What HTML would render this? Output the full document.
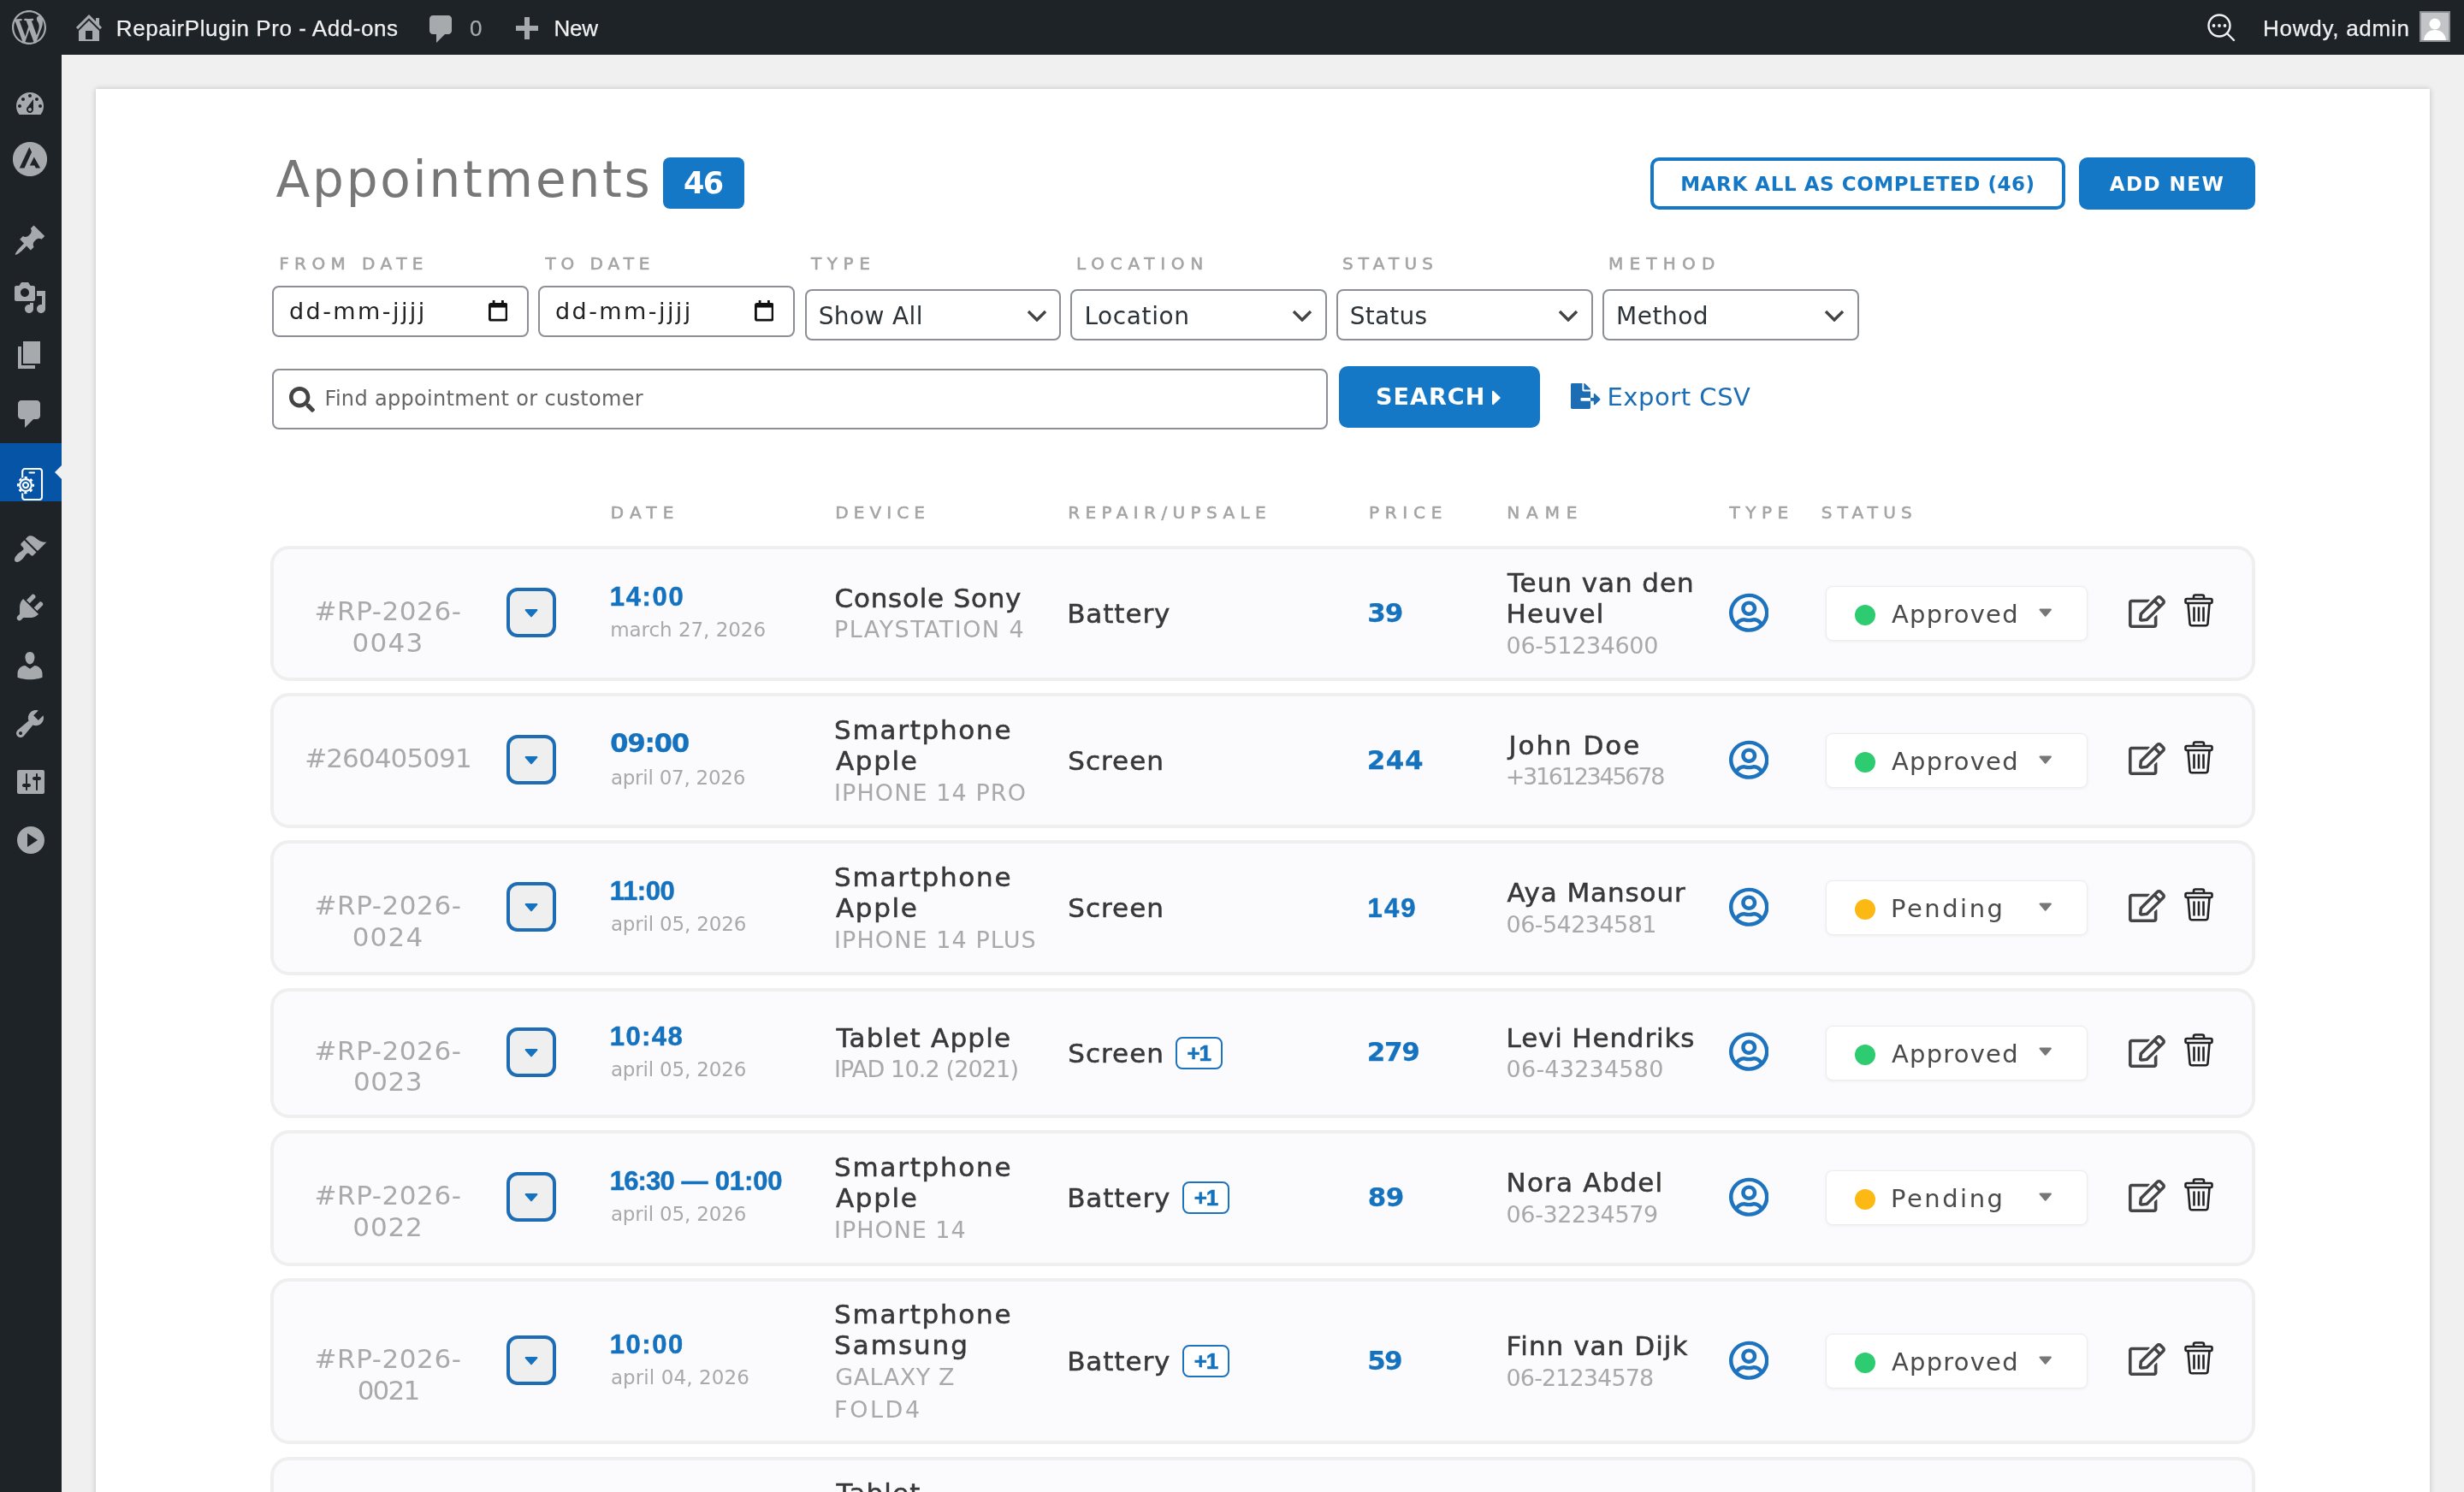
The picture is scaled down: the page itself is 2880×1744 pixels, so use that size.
<!DOCTYPE html><html><head><meta charset='utf-8'><title>Appointments</title><style>
*{box-sizing:border-box;margin:0;padding:0}
html,body{width:2880px;height:1744px;overflow:hidden;background:#f0f0f1}
@media (max-width:1500px){html{zoom:.5}}
body{position:relative;will-change:transform;background:transparent;font-family:"DejaVu Sans","Liberation Sans",sans-serif;color:#333}
.abs{position:absolute}
#bar{position:absolute;left:0;top:0;width:2880px;height:64px;background:#1d2327;font-family:"Liberation Sans",sans-serif;font-size:26px;color:#f0f0f1}
#bar span{position:absolute;top:1px;line-height:64px;white-space:nowrap;-webkit-text-stroke:.25px currentColor}
#side{position:absolute;left:0;top:64px;width:72px;height:1680px;background:#1d2327}
#card{position:absolute;left:112px;top:104px;width:2728px;height:1700px;background:#fff;box-shadow:0 0 7px rgba(0,0,0,.2)}
.lbl{position:absolute;font-size:20px;color:#a4a4a4;-webkit-text-stroke:.6px #a4a4a4;white-space:nowrap;line-height:24px}
.inp{position:absolute;border:2px solid #8c8f94;border-radius:8px;background:#fff;height:60px;width:300px}
.inp span{white-space:nowrap}
.inp>div{position:absolute;left:18px;top:0;line-height:55px;font-size:27px;color:#222;white-space:nowrap}
.sel>div{left:16.5px;line-height:59px;font-size:28px;color:#2c3338}
.row{position:absolute;left:316px;width:2320px;border:4px solid #efefef;border-radius:22px;background:#fbfbfd}
.c{position:absolute;top:0;bottom:0;display:flex;flex-direction:column;justify-content:center}
.id{position:absolute;left:15.5px;width:236px;text-align:center;font-size:31px;line-height:36.5px;color:#a9a9a9;top:50%;margin-top:-21px;white-space:nowrap}
.btn{position:absolute;left:272px;width:58px;height:58px;border:4px solid #1e6db4;border-radius:13px;background:#efefef;top:50%;margin-top:-30px}
.t{position:relative;top:.7px;font-family:"Liberation Sans",sans-serif;font-size:31px;font-weight:bold;color:#1572be;-webkit-text-stroke:.5px #1572be;line-height:38px;white-space:nowrap}
.d{font-size:23px;color:#a9a9a9;line-height:40px;white-space:nowrap}
.n{font-size:31px;color:#383838;line-height:36.5px;-webkit-text-stroke:.55px #383838;white-space:nowrap}
.m{font-size:27px;color:#a9a9a9;line-height:38px;white-space:nowrap}
.p{padding-top:1px;font-family:"Liberation Sans",sans-serif;font-size:31px;font-weight:bold;color:#1572be;-webkit-text-stroke:.5px #1572be;white-space:nowrap}
.st{position:absolute;left:1814px;width:306px;height:64px;top:50%;margin-top:-32px;background:#fff;border:1px solid #ececec;border-radius:8px;box-shadow:0 1px 4px rgba(0,0,0,.06)}
.st i{position:absolute;left:33px;top:21px;width:24px;height:24px;border-radius:50%}
.st div{position:absolute;left:76px;top:0;line-height:64px;font-size:29px;color:#4a4a4a;white-space:nowrap}
.dj{font-family:"DejaVu Sans",sans-serif;-webkit-text-stroke-width:.25px;position:relative}
.p .dj{top:-2px}
.t .dj{top:-1.5px}
.plus{position:absolute;border:2px solid #1e73be;border-radius:8px;width:55px;height:38px;background:#fff;font-family:"Liberation Sans",sans-serif;font-size:26px;font-weight:bold;color:#1572be;-webkit-text-stroke:.5px #1572be;text-align:center;line-height:35px;letter-spacing:-1px;top:50%;margin-top:-19px}
</style></head><body>
<div id="bar"><svg style="position:absolute;left:14px;top:12px" width="40" height="40" viewBox="0 0 20 20"><path fill="#a7aaad" d="M20 10c0-5.51-4.49-10-10-10C4.48 0 0 4.49 0 10c0 5.52 4.48 10 10 10 5.51 0 10-4.48 10-10zM7.78 15.37L4.37 6.22c.55-.02 1.17-.08 1.17-.08.5-.06.44-1.13-.06-1.11 0 0-1.45.11-2.37.11-.18 0-.37 0-.58-.01C4.12 2.69 6.87 1.11 10 1.11c2.33 0 4.45.87 6.05 2.34-.68-.11-1.65.39-1.65 1.58 0 .74.45 1.36.9 2.1.35.61.55 1.36.55 2.46 0 1.49-1.4 5-1.4 5l-3.03-8.37c.54-.02.82-.17.82-.17.5-.05.44-1.25-.06-1.22 0 0-1.44.12-2.38.12-.87 0-2.33-.12-2.33-.12-.5-.03-.56 1.2-.06 1.22l.92.08 1.26 3.41zM17.41 10c.24-.64.74-1.87.43-4.25.7 1.29 1.05 2.71 1.05 4.25 0 3.29-1.73 6.24-4.4 7.78.97-2.59 1.94-5.2 2.92-7.78zM6.1 18.09C3.12 16.65 1.11 13.53 1.11 10c0-1.3.23-2.48.72-3.59C3.25 10.3 4.67 14.2 6.1 18.09zm4.03-6.63l2.58 6.98c-.86.29-1.76.45-2.71.45-.79 0-1.57-.11-2.29-.33.81-2.38 1.62-4.74 2.42-7.1z"/></svg><svg style="position:absolute;left:84px;top:12px" width="40" height="40" viewBox="0 0 20 20"><path fill="#a7aaad" d="M16 8.5l1.53 1.53-1.06 1.06L10 4.62l-6.47 6.47-1.06-1.06L10 2.5l4 4v-2h2v4zm-6-2.46l6 5.99V18H4v-5.97zM12 17v-5H8v5h4z"/></svg><span style="left:135.8px;letter-spacing:0.57px">RepairPlugin Pro - Add-ons</span><svg style="position:absolute;left:496px;top:14px" width="40" height="40" viewBox="0 0 20 20"><path fill="#a7aaad" d="M5 2h9c1.1 0 2 .9 2 2v7c0 1.1-.9 2-2 2h-2l-5 5v-5H5c-1.1 0-2-.9-2-2V4c0-1.1.9-2 2-2z"/></svg><span style="left:549px;color:#a7aaad">0</span><svg style="position:absolute;left:595px;top:16px" width="40" height="40" viewBox="0 0 20 20"><path fill="#a7aaad" d="M17 7v3h-5v5H9v-5H4V7h5V2h3v5h5z"/></svg><span style="left:647.5px;letter-spacing:-.3px">New</span><svg style="position:absolute;left:2578px;top:14px" width="36" height="36" viewBox="0 0 36 36" fill="none" stroke="#f0f0f1" stroke-width="2.4"><circle cx="16" cy="16" r="12.5"/><path d="M25 25l8 8" stroke-linecap="round"/><g fill="#f0f0f1" stroke="none"><circle cx="9.5" cy="16" r="1.900"/><circle cx="16" cy="16" r="1.900"/><circle cx="22.500" cy="16" r="1.900"/></g></svg><span style="left:2645px;letter-spacing:0.74px">Howdy, admin</span><svg style="position:absolute;left:2828px;top:13px" width="36" height="36" viewBox="0 0 36 36"><rect width="36" height="36" fill="#8c8f94"/><rect x="2" y="2" width="32" height="32" fill="#c3c4c7"/><circle cx="18" cy="15" r="6.5" fill="#fff"/><path d="M5 34c1-8 6-12 13-12s12 4 13 12z" fill="#fff"/></svg></div>
<div id="side"><svg style="position:absolute;left:15px;top:38px" width="40" height="40" viewBox="0 0 20 20"><path fill="#a7aaad" d="M3.76 16h12.48c1.1-1.37 1.76-3.11 1.76-5 0-4.42-3.58-8-8-8s-8 3.58-8 8c0 1.89.66 3.63 1.76 5zM10 4c.55 0 1 .45 1 1s-.45 1-1 1-1-.45-1-1 .45-1 1-1zM6 6c.55 0 1 .45 1 1s-.45 1-1 1-1-.45-1-1 .45-1 1-1zm8 0c.55 0 1 .45 1 1s-.45 1-1 1-1-.45-1-1 .45-1 1-1zm-5.37 5.55L12 7v6c0 1.1-.9 2-2 2s-2-.9-2-2c0-.57.24-1.08.63-1.45zM4 10c.55 0 1 .45 1 1s-.45 1-1 1-1-.45-1-1 .45-1 1-1zm12 0c.55 0 1 .45 1 1s-.45 1-1 1-1-.45-1-1 .45-1 1-1zm-5 3c0-.55-.45-1-1-1s-1 .45-1 1 .45 1 1 1 1-.45 1-1z"/></svg><svg style="position:absolute;left:15px;top:102px" width="40" height="40" viewBox="0 0 40 40"><circle cx="20" cy="20" r="20.1" fill="#a7aaad"/><path d="M19.200 6L22.100 11.700 13.500 30.400H7.800zM24.800 17.400L32.100 30.400H26.900L25.400 27.500H19.800z" fill="#1d2327"/></svg><svg style="position:absolute;left:15px;top:196.5px" width="40" height="40" viewBox="0 0 20 20"><path fill="#a7aaad" d="M10.44 3.02l1.82-1.82 6.36 6.35-1.83 1.82c-1.05-.68-2.48-.57-3.41.36l-.75.75c-.92.93-1.04 2.35-.35 3.41l-1.83 1.82-2.41-2.41-2.8 2.79c-.42.42-3.38 2.71-3.8 2.29s1.86-3.39 2.28-3.81l2.79-2.79L4.1 9.36l1.83-1.82c1.05.69 2.48.57 3.4-.36l.75-.75c.93-.92 1.05-2.35.36-3.41z"/></svg><svg style="position:absolute;left:15px;top:264px" width="40" height="40" viewBox="0 0 20 20"><path fill="#a7aaad" d="M13 11V4c0-.55-.45-1-1-1h-1.67L9 1H5L3.67 3H2c-.55 0-1 .45-1 1v7c0 .55.45 1 1 1h10c.55 0 1-.45 1-1zM7 4.5c1.38 0 2.5 1.12 2.5 2.5S8.38 9.5 7 9.5 4.5 8.38 4.5 7 5.62 4.5 7 4.5zM14 6h5v10.5c0 1.38-1.12 2.5-2.5 2.5S14 17.88 14 16.5s1.12-2.5 2.5-2.5c.17 0 .34.02.5.05V9h-3V6zm-4 8.05V13h2v3.5c0 1.38-1.12 2.5-2.5 2.5S7 17.88 7 16.5 8.12 14 9.5 14c.17 0 .34.02.5.05z"/></svg><svg style="position:absolute;left:15px;top:331.3px" width="40" height="40" viewBox="0 0 20 20"><path fill="#a7aaad" d="M6 15V2h10v13H6zm-1 1h8v2H3V5h2v11z"/></svg><svg style="position:absolute;left:15px;top:399.5px" width="40" height="40" viewBox="0 0 20 20"><path fill="#a7aaad" d="M5 2h9c1.1 0 2 .9 2 2v7c0 1.1-.9 2-2 2h-2l-5 5v-5H5c-1.1 0-2-.9-2-2V4c0-1.1.9-2 2-2z"/></svg><div style="position:absolute;left:0;top:454px;width:72px;height:68px;background:#0654a6"></div><div style="position:absolute;left:64px;top:480px;width:0;height:0;border:8px solid transparent;border-right-color:#f0f0f1;border-left-width:0"></div><svg style="position:absolute;left:14px;top:481px" width="40" height="42" viewBox="0 0 40 42" fill="none" stroke="#fff" stroke-width="2.1"><path d="M12.200 13.500V6a3 3 0 0 1 3-3H32a3 3 0 0 1 3 3V36a3 3 0 0 1-3 3H15.200a3 3 0 0 1-3-3V31.500"/><path d="M20.500 7.500h5.500" stroke-linecap="round"/><circle cx="16" cy="22.100" r="3.100"/><circle cx="16" cy="22.100" r="6.900" stroke-width="2.200"/><circle cx="16" cy="22.100" r="8.900" stroke-width="2.400" stroke-dasharray="3.300 3.690" stroke-dashoffset="1.650"/></svg><svg style="position:absolute;left:15px;top:558px" width="40" height="40" viewBox="0 0 20 20"><path fill="#a7aaad" d="M14.48 11.06L7.41 3.99l1.5-1.5c.5-.56 2.3-.47 3.51.32 1.21.8 1.43 1.28 2.91 2.1 1.18.64 2.45 1.26 4.45.85zm-.71.71L6.7 4.7 4.93 6.47c-.39.39-.39 1.02 0 1.41l1.06 1.06c.39.39.39 1.03 0 1.42-.6.6-1.43 1.11-2.21 1.69-.35.26-.7.53-1.01.84C1.43 14.23.4 16.08 1.4 17.07c.99 1 2.84-.03 4.18-1.36.31-.31.58-.66.85-1.02.57-.78 1.08-1.61 1.69-2.21.39-.39 1.02-.39 1.41 0l1.06 1.06c.39.39 1.02.39 1.41 0z"/></svg><svg style="position:absolute;left:15px;top:626.3px" width="40" height="40" viewBox="0 0 20 20"><path fill="#a7aaad" d="M13.11 4.36L9.87 7.6 8 5.73l3.24-3.24c.35-.34 1.05-.2 1.56.32.52.51.66 1.21.31 1.55zm-8 1.77l.91-1.12 9.01 9.01-1.19.84c-.71.71-2.63 1.16-3.82 1.16H6.14L4.9 17.26c-.59.59-1.54.59-2.12 0-.59-.58-.59-1.53 0-2.12l1.24-1.24v-3.88c0-1.13.4-3.19 1.09-3.89zm7.26 3.97l3.24-3.24c.34-.35 1.04-.21 1.55.31.52.51.66 1.21.31 1.55l-3.24 3.25z"/></svg><svg style="position:absolute;left:15px;top:693.7px" width="40" height="40" viewBox="0 0 20 20"><path fill="#a7aaad" d="M10 9.25c-2.27 0-2.73-3.44-2.73-3.44C7 4.02 7.82 2 9.97 2c2.16 0 2.98 2.02 2.71 3.81 0 0-.41 3.44-2.68 3.44zm0 2.57L12.72 10c2.39 0 4.52 2.33 4.52 4.53v2.49s-3.65 1.13-7.24 1.13c-3.65 0-7.24-1.13-7.24-1.13v-2.49c0-2.25 1.94-4.48 4.47-4.48z"/></svg><svg style="position:absolute;left:15px;top:762.2px" width="40" height="40" viewBox="0 0 20 20"><path fill="#a7aaad" d="M16.68 9.77c-1.34 1.34-3.3 1.67-4.95.99l-5.41 6.52c-.99.99-2.59.99-3.58 0s-.99-2.59 0-3.57l6.52-5.42c-.68-1.65-.35-3.61.99-4.95 1.28-1.28 3.12-1.62 4.72-1.06l-2.89 2.89 2.82 2.82 2.86-2.87c.53 1.58.18 3.39-1.08 4.65zM3.81 16.21c.4.39 1.04.39 1.43 0 .4-.4.4-1.04 0-1.43-.39-.4-1.03-.4-1.43 0-.39.39-.39 1.03 0 1.43z"/></svg><svg style="position:absolute;left:16px;top:830px" width="40" height="40" viewBox="0 0 20 20"><path fill="#a7aaad" d="M18 16V4c0-.55-.45-1-1-1H3c-.55 0-1 .45-1 1v12c0 .55.45 1 1 1h14c.55 0 1-.45 1-1zM8 11h1c.55 0 1 .45 1 1s-.45 1-1 1H8v1.5c0 .28-.22.5-.5.5s-.5-.22-.5-.5V13H6c-.55 0-1-.45-1-1s.45-1 1-1h1V5.5c0-.28.22-.5.5-.5s.5.22.5.5V11zm5-2h-1c-.55 0-1-.45-1-1s.45-1 1-1h1V5.5c0-.28.22-.5.5-.5s.5.22.5.5V7h1c.55 0 1 .45 1 1s-.45 1-1 1h-1v5.5c0 .28-.22.5-.5.5s-.5-.22-.5-.5V9z"/></svg><svg style="position:absolute;left:16px;top:898px" width="40" height="40" viewBox="0 0 20 20"><path fill="#a7aaad" d="M10 2.02c-4.42 0-8 3.58-8 8s3.58 8 8 8 8-3.58 8-8-3.58-8-8-8zM8 14V6l6 4z"/></svg></div>
<div id="card"></div>
<div class="abs" style="left:322.6px;top:162.1px;font-size:58px;line-height:96px;color:#777;letter-spacing:2.8px;white-space:nowrap">Appointments</div>
<div class="abs" style="left:775px;top:184px;width:95px;height:60px;border-radius:8px;background:#1578c6;color:#fff;font-weight:bold;font-size:35px;line-height:61px;text-align:center;letter-spacing:-1.5px;text-indent:-1.5px">46</div>
<div class="abs" style="left:1929px;top:184px;width:485px;height:61px;border:4px solid #1578c6;border-radius:10px;color:#1578c6;font-weight:bold;font-size:23px;line-height:55px;text-align:center;letter-spacing:0.56px;white-space:nowrap">MARK ALL AS COMPLETED (46)</div>
<div class="abs" style="left:2430px;top:184px;width:206px;height:61px;border-radius:10px;background:#1578c6;color:#fff;font-weight:bold;font-size:23px;line-height:63px;text-align:center;letter-spacing:1.46px;white-space:nowrap">ADD NEW</div>
<div class="lbl" style="left:326.2px;top:295.5px"><span style="letter-spacing:6.43px">FROM DATE</span></div>
<div class="lbl" style="left:637.4px;top:295.5px"><span style="letter-spacing:5.95px">TO DATE</span></div>
<div class="lbl" style="left:948.1px;top:295.5px"><span style="letter-spacing:6.54px">TYPE</span></div>
<div class="lbl" style="left:1258.1px;top:295.5px"><span style="letter-spacing:6.72px">LOCATION</span></div>
<div class="lbl" style="left:1569.0px;top:295.5px"><span style="letter-spacing:6.17px">STATUS</span></div>
<div class="lbl" style="left:1879.9px;top:295.5px"><span style="letter-spacing:7.24px">METHOD</span></div>
<div class="inp" style="left:318px;top:334px"><div style="letter-spacing:2.43px">dd-mm-jjjj</div><svg style="position:absolute;left:250.5px;top:15px" width="22.500" height="24.500" viewBox="0 0 24 26"><path d="M5 0h3v3h8V0h3v3h2a3 3 0 0 1 3 3v17a3 3 0 0 1-3 3H3a3 3 0 0 1-3-3V6a3 3 0 0 1 3-3h2zM3 9v13.500a.5.5 0 0 0 .5.5h17a.5.5 0 0 0 .5-.5V9z" fill="#111"/></svg></div>
<div class="inp" style="left:629px;top:334px"><div style="letter-spacing:2.43px">dd-mm-jjjj</div><svg style="position:absolute;left:250.5px;top:15px" width="22.500" height="24.500" viewBox="0 0 24 26"><path d="M5 0h3v3h8V0h3v3h2a3 3 0 0 1 3 3v17a3 3 0 0 1-3 3H3a3 3 0 0 1-3-3V6a3 3 0 0 1 3-3h2zM3 9v13.500a.5.5 0 0 0 .5.5h17a.5.5 0 0 0 .5-.5V9z" fill="#111"/></svg></div>
<div class="inp sel" style="left:940.5px;width:299px;top:338px"><div style="left:14.2px;letter-spacing:0.37px">Show All</div><svg style="position:absolute;left:257px;top:21.5px" width="24" height="14" viewBox="0 0 24 14" fill="none" stroke="#444" stroke-width="3.400"><path d="M2 2l10 10L22 2"/></svg></div>
<div class="inp sel" style="left:1250.5px;width:300px;top:338px"><div style="left:14.9px;letter-spacing:0.61px">Location</div><svg style="position:absolute;left:257px;top:21.5px" width="24" height="14" viewBox="0 0 24 14" fill="none" stroke="#444" stroke-width="3.400"><path d="M2 2l10 10L22 2"/></svg></div>
<div class="inp sel" style="left:1561.5px;width:300px;top:338px"><div style="left:14.2px;letter-spacing:0.25px">Status</div><svg style="position:absolute;left:257px;top:21.5px" width="24" height="14" viewBox="0 0 24 14" fill="none" stroke="#444" stroke-width="3.400"><path d="M2 2l10 10L22 2"/></svg></div>
<div class="inp sel" style="left:1872.5px;width:300px;top:338px"><div style="left:14.6px;letter-spacing:0.5px">Method</div><svg style="position:absolute;left:257px;top:21.5px" width="24" height="14" viewBox="0 0 24 14" fill="none" stroke="#444" stroke-width="3.400"><path d="M2 2l10 10L22 2"/></svg></div>
<div class="inp" style="left:318px;top:431px;width:1234px;height:71px"><div style="left:59.5px;line-height:66px;font-size:24px;color:#666;letter-spacing:0.32px">Find appointment or customer</div><svg style="position:absolute;left:18px;top:19px;" width="30" height="30" viewBox="0 0 512 512" preserveAspectRatio="none"><path fill="#444" d="M505 442.7L405.300 343c-4.500-4.500-10.600-7-17-7H372c27.600-35.300 44-79.700 44-128C416 93.100 322.900 0 208 0S0 93.100 0 208s93.100 208 208 208c48.300 0 92.700-16.400 128-44v16.300c0 6.400 2.500 12.500 7 17l99.700 99.700c9.400 9.400 24.600 9.400 33.900 0l28.300-28.300c9.400-9.400 9.400-24.600.1-34zM208 336c-70.700 0-128-57.200-128-128 0-70.700 57.200-128 128-128 70.700 0 128 57.200 128 128 0 70.700-57.200 128-128 128z"/></svg></div>
<div class="abs" style="left:1565px;top:428px;width:235px;height:72px;border-radius:10px;background:#1578c6"><span class="abs" style="left:43px;top:0;line-height:72px;font-size:27px;font-weight:bold;color:#fff;letter-spacing:1.05px">SEARCH</span><svg style="position:absolute;left:178.7px;top:23px;" width="11" height="28" viewBox="0 0 192 512" preserveAspectRatio="none"><path fill="#fff" d="M0 384.662V127.338c0-17.818 21.543-26.741 34.142-14.142l128.662 128.662c7.810 7.810 7.810 20.474 0 28.284L34.142 398.804C21.543 411.404 0 402.480 0 384.662z"/></svg></div>
<svg style="position:absolute;left:1836px;top:447.7px;" width="34.5" height="30" viewBox="0 0 576 512" preserveAspectRatio="none"><path fill="#1d6db5" d="M384 121.900c0-6.300-2.500-12.400-7-16.900L279.100 7c-4.500-4.500-10.600-7-17-7H256v128h128zM571 308l-95.700-96.400c-10.100-10.100-27.400-3-27.400 11.300V288h-64v64h64v65.200c0 14.300 17.300 21.400 27.400 11.300L571 332c6.600-6.600 6.600-17.400 0-24zm-379 28v-32c0-8.800 7.200-16 16-16h176V160H248c-13.200 0-24-10.800-24-24V0H24C10.700 0 0 10.700 0 24v464c0 13.300 10.700 24 24 24h336c13.300 0 24-10.700 24-24V352H208c-8.800 0-16-7.200-16-16z"/></svg>
<div class="abs" style="left:1878.5px;top:440px;line-height:48px;font-size:29px;color:#1d6db5;white-space:nowrap;letter-spacing:0.53px">Export CSV</div>
<div class="lbl" style="left:713.7px;top:586.5px"><span style="letter-spacing:7.24px">DATE</span></div>
<div class="lbl" style="left:976.2px;top:586.5px"><span style="letter-spacing:6.11px">DEVICE</span></div>
<div class="lbl" style="left:1248.2px;top:586.5px"><span style="letter-spacing:6.4px">REPAIR/UPSALE</span></div>
<div class="lbl" style="left:1599.9px;top:586.5px"><span style="letter-spacing:6.76px">PRICE</span></div>
<div class="lbl" style="left:1761.2px;top:586.5px"><span style="letter-spacing:7.9px">NAME</span></div>
<div class="lbl" style="left:2021.4px;top:586.5px"><span style="letter-spacing:6.54px">TYPE</span></div>
<div class="lbl" style="left:2128.8px;top:586.5px"><span style="letter-spacing:6.17px">STATUS</span></div>
<div class="row" style="top:638px;height:158px"><div class="id"><span style="letter-spacing:0.58px">#RP-2026-</span><br><span style="letter-spacing:1.28px">0043</span></div><div class="btn"><svg style="position:absolute;left:17px;top:9.8px;" width="16" height="29" viewBox="0 0 320 512" preserveAspectRatio="none"><path fill="#1572be" d="M31.300 192h257.300c17.800 0 26.700 21.500 14.100 34.100L174.100 354.800c-7.800 7.800-20.500 7.800-28.300 0L17.200 226.100C4.600 213.500 13.500 192 31.300 192z"/></svg></div><div class="c" style="left:394.20000000000005px"><div class="t"><span style="letter-spacing:1.66px;margin-left:-1.4px">14:00</span></div><div class="d" style="margin-left:-1.0px"><span style="letter-spacing:-0.04px">march 27, 2026</span></div></div><div class="c" style="left:655px;width:270px;padding-top:2px"><div class="n"><span style="letter-spacing:0.75px;margin-left:0.6px">Console Sony</span></div><div class="m"><span style="letter-spacing:1.44px;margin-left:-0.0px">PLAYSTATION 4</span></div></div><div class="c n" style="left:927.2px"><span style="letter-spacing:0.91px">Battery</span></div><div class="c p" style="left:1280px"><span class="dj" style="letter-spacing:-1.24px;margin-left:-1.7px">39</span></div><div class="c" style="left:1440px;width:260px;padding-top:2px"><div class="n"><span style="letter-spacing:0.95px;margin-left:2.0px">Teun van den</span><br><span style="letter-spacing:1.16px;margin-left:0.6px">Heuvel</span></div><div class="m"><span style="letter-spacing:-0.38px;margin-left:0.6px">06-51234600</span></div></div><svg style="position:absolute;left:1700.5px;top:0px;top:50%;margin-top:-24.5px" width="46.5" height="46.5" viewBox="0 0 496 512" preserveAspectRatio="none"><path fill="#1e73be" d="M248 104c-53 0-96 43-96 96s43 96 96 96 96-43 96-96-43-96-96-96zm0 144c-26.500 0-48-21.500-48-48s21.500-48 48-48 48 21.500 48 48-21.500 48-48 48zm0-240C111 8 0 119 0 256s111 248 248 248 248-111 248-248S385 8 248 8zm0 448c-49.700 0-95.100-18.300-130.100-48.400 14.900-23 40.400-38.600 69.600-39.500 20.800 6.400 40.600 9.600 60.500 9.600s39.700-3.100 60.500-9.600c29.200 1 54.700 16.500 69.600 39.500-35 30.100-80.400 48.400-130.100 48.400zm162.700-84.100c-24.400-31.400-62.100-51.900-105.100-51.900-10.200 0-26 9.600-57.600 9.600-31.500 0-47.400-9.600-57.600-9.600-42.900 0-80.600 20.500-105.100 51.900C61.900 339.200 48 299.200 48 256c0-110.300 89.700-200 200-200s200 89.700 200 200c0 43.200-13.900 83.200-37.300 115.900z"/></svg><div class="st"><i style="background:#2ecc71"></i><div style="margin-left:0.0px"><span style="letter-spacing:1.21px">Approved</span></div><svg style="position:absolute;left:248px;top:14.5px;" width="15.5" height="28" viewBox="0 0 320 512" preserveAspectRatio="none"><path fill="#777" d="M31.300 192h257.300c17.800 0 26.700 21.500 14.100 34.100L174.100 354.800c-7.800 7.800-20.500 7.800-28.300 0L17.200 226.100C4.600 213.500 13.500 192 31.300 192z"/></svg></div><svg style="position:absolute;left:2168px;top:0px;top:50%;margin-top:-21px" width="43" height="38" viewBox="0 0 576 512" preserveAspectRatio="none"><path fill="#444" d="M402.3 344.9l32-32c5-5 13.700-1.500 13.700 5.700V464c0 26.500-21.500 48-48 48H48c-26.500 0-48-21.500-48-48V112c0-26.500 21.500-48 48-48h273.500c7.100 0 10.700 8.600 5.700 13.700l-32 32c-1.500 1.500-3.500 2.300-5.700 2.300H48v352h352V350.500c0-2.100.8-4.100 2.300-5.600zm156.600-201.800L296.300 405.700l-90.400 10c-26.200 2.900-48.500-19.200-45.600-45.600l10-90.400L432.900 17.100c22.900-22.900 59.900-22.900 82.700 0l43.200 43.200c22.900 22.900 22.900 60 .1 82.800zM460.100 174L402 115.900 216.200 301.800l-7.300 65.300 65.300-7.300L460.100 174zm64.800-79.700l-43.200-43.200c-4.100-4.100-10.800-4.100-14.800 0L436 82l58.100 58.100 30.900-30.900c4-4.200 4-10.800-.1-14.900z"/></svg><svg style="position:absolute;left:2233px;top:50%;margin-top:-23px" width="34" height="39" viewBox="0 0 34 39" fill="none" stroke="#222" stroke-width="2.600"><path d="M11 6V3.500a2 2 0 0 1 2-2h8a2 2 0 0 1 2 2V6"/><rect x="1.500" y="6" width="31" height="5" rx="1.500"/><path d="M4.500 11l2 24a2.500 2.500 0 0 0 2.500 2.300h16a2.500 2.500 0 0 0 2.500-2.300l2-24"/><path d="M11.500 15.500v17M17 15.500v17M22.500 15.500v17"/></svg></div>
<div class="row" style="top:810.3px;height:157.7px"><div class="id"><span style="letter-spacing:-0.89px">#260405091</span></div><div class="btn"><svg style="position:absolute;left:17px;top:9.8px;" width="16" height="29" viewBox="0 0 320 512" preserveAspectRatio="none"><path fill="#1572be" d="M31.300 192h257.300c17.800 0 26.700 21.500 14.100 34.100L174.100 354.800c-7.800 7.800-20.500 7.800-28.300 0L17.200 226.100C4.600 213.500 13.500 192 31.300 192z"/></svg></div><div class="c" style="left:394.20000000000005px"><div class="t"><span class="dj" style="letter-spacing:-1.31px;margin-left:-1.2px">09:00</span></div><div class="d" style="margin-left:-0.3px"><span style="letter-spacing:-0.25px">april 07, 2026</span></div></div><div class="c" style="left:655px;width:270px;padding-top:2px"><div class="n"><span style="letter-spacing:1.74px;margin-left:0.1px">Smartphone</span><br><span style="letter-spacing:1.63px;margin-left:2.0px">Apple</span></div><div class="m"><span style="letter-spacing:1.09px;margin-left:-0.0px">IPHONE 14 PRO</span></div></div><div class="c n" style="left:928.2px"><span style="letter-spacing:1.04px">Screen</span></div><div class="c p" style="left:1280px"><span class="dj" style="letter-spacing:0.47px;margin-left:-2.2px">244</span></div><div class="c" style="left:1440px;width:260px;padding-top:2px"><div class="n"><span style="letter-spacing:1.95px;margin-left:3.5px">John Doe</span></div><div class="m"><span style="letter-spacing:-2.27px;margin-left:-0.3px">+31612345678</span></div></div><svg style="position:absolute;left:1700.5px;top:0px;top:50%;margin-top:-24.5px" width="46.5" height="46.5" viewBox="0 0 496 512" preserveAspectRatio="none"><path fill="#1e73be" d="M248 104c-53 0-96 43-96 96s43 96 96 96 96-43 96-96-43-96-96-96zm0 144c-26.500 0-48-21.500-48-48s21.500-48 48-48 48 21.500 48 48-21.500 48-48 48zm0-240C111 8 0 119 0 256s111 248 248 248 248-111 248-248S385 8 248 8zm0 448c-49.700 0-95.100-18.300-130.100-48.400 14.900-23 40.400-38.600 69.600-39.500 20.800 6.400 40.600 9.600 60.500 9.600s39.700-3.100 60.500-9.600c29.200 1 54.700 16.500 69.600 39.500-35 30.100-80.400 48.400-130.100 48.400zm162.700-84.100c-24.400-31.400-62.100-51.900-105.100-51.900-10.200 0-26 9.600-57.600 9.600-31.500 0-47.400-9.600-57.600-9.600-42.900 0-80.600 20.500-105.100 51.900C61.900 339.200 48 299.200 48 256c0-110.300 89.700-200 200-200s200 89.700 200 200c0 43.200-13.900 83.200-37.300 115.900z"/></svg><div class="st"><i style="background:#2ecc71"></i><div style="margin-left:0.0px"><span style="letter-spacing:1.21px">Approved</span></div><svg style="position:absolute;left:248px;top:14.5px;" width="15.5" height="28" viewBox="0 0 320 512" preserveAspectRatio="none"><path fill="#777" d="M31.300 192h257.300c17.800 0 26.700 21.500 14.100 34.100L174.100 354.800c-7.800 7.800-20.500 7.800-28.300 0L17.200 226.100C4.600 213.500 13.500 192 31.300 192z"/></svg></div><svg style="position:absolute;left:2168px;top:0px;top:50%;margin-top:-21px" width="43" height="38" viewBox="0 0 576 512" preserveAspectRatio="none"><path fill="#444" d="M402.3 344.9l32-32c5-5 13.700-1.500 13.700 5.700V464c0 26.500-21.500 48-48 48H48c-26.500 0-48-21.500-48-48V112c0-26.500 21.500-48 48-48h273.500c7.100 0 10.700 8.600 5.700 13.700l-32 32c-1.500 1.500-3.500 2.300-5.700 2.300H48v352h352V350.500c0-2.100.8-4.100 2.300-5.600zm156.600-201.800L296.300 405.700l-90.400 10c-26.200 2.900-48.500-19.200-45.600-45.600l10-90.400L432.900 17.100c22.900-22.900 59.900-22.900 82.700 0l43.200 43.200c22.900 22.900 22.900 60 .1 82.800zM460.100 174L402 115.900 216.200 301.800l-7.300 65.300 65.300-7.300L460.100 174zm64.800-79.700l-43.200-43.200c-4.100-4.100-10.800-4.100-14.800 0L436 82l58.100 58.100 30.900-30.900c4-4.200 4-10.800-.1-14.900z"/></svg><svg style="position:absolute;left:2233px;top:50%;margin-top:-23px" width="34" height="39" viewBox="0 0 34 39" fill="none" stroke="#222" stroke-width="2.600"><path d="M11 6V3.500a2 2 0 0 1 2-2h8a2 2 0 0 1 2 2V6"/><rect x="1.500" y="6" width="31" height="5" rx="1.500"/><path d="M4.500 11l2 24a2.500 2.500 0 0 0 2.500 2.300h16a2.500 2.500 0 0 0 2.500-2.300l2-24"/><path d="M11.500 15.500v17M17 15.500v17M22.500 15.500v17"/></svg></div>
<div class="row" style="top:982.3px;height:158.2px"><div class="id"><span style="letter-spacing:0.58px">#RP-2026-</span><br><span style="letter-spacing:1.2px">0024</span></div><div class="btn"><svg style="position:absolute;left:17px;top:9.8px;" width="16" height="29" viewBox="0 0 320 512" preserveAspectRatio="none"><path fill="#1572be" d="M31.300 192h257.300c17.800 0 26.700 21.500 14.100 34.100L174.100 354.800c-7.800 7.800-20.500 7.800-28.300 0L17.200 226.100C4.600 213.500 13.500 192 31.300 192z"/></svg></div><div class="c" style="left:394.20000000000005px"><div class="t"><span style="letter-spacing:-0.41px;margin-left:-1.4px">11:00</span></div><div class="d" style="margin-left:-0.3px"><span style="letter-spacing:-0.17px">april 05, 2026</span></div></div><div class="c" style="left:655px;width:270px;padding-top:2px"><div class="n"><span style="letter-spacing:1.74px;margin-left:0.1px">Smartphone</span><br><span style="letter-spacing:1.63px;margin-left:2.0px">Apple</span></div><div class="m"><span style="letter-spacing:1.09px;margin-left:-0.0px">IPHONE 14 PLUS</span></div></div><div class="c n" style="left:928.2px"><span style="letter-spacing:1.04px">Screen</span></div><div class="c p" style="left:1280px"><span style="letter-spacing:2.12px;margin-left:-1.4px">149</span></div><div class="c" style="left:1440px;width:260px;padding-top:2px"><div class="n"><span style="letter-spacing:0.89px;margin-left:1.6px">Aya Mansour</span></div><div class="m"><span style="letter-spacing:-0.57px;margin-left:0.6px">06-54234581</span></div></div><svg style="position:absolute;left:1700.5px;top:0px;top:50%;margin-top:-24.5px" width="46.5" height="46.5" viewBox="0 0 496 512" preserveAspectRatio="none"><path fill="#1e73be" d="M248 104c-53 0-96 43-96 96s43 96 96 96 96-43 96-96-43-96-96-96zm0 144c-26.500 0-48-21.500-48-48s21.500-48 48-48 48 21.500 48 48-21.500 48-48 48zm0-240C111 8 0 119 0 256s111 248 248 248 248-111 248-248S385 8 248 8zm0 448c-49.700 0-95.100-18.300-130.100-48.400 14.900-23 40.400-38.600 69.600-39.500 20.800 6.400 40.600 9.600 60.500 9.600s39.700-3.100 60.500-9.600c29.200 1 54.700 16.500 69.600 39.500-35 30.100-80.400 48.400-130.100 48.400zm162.700-84.100c-24.400-31.400-62.100-51.900-105.100-51.900-10.200 0-26 9.600-57.600 9.600-31.500 0-47.400-9.600-57.600-9.600-42.900 0-80.600 20.500-105.100 51.900C61.900 339.200 48 299.200 48 256c0-110.300 89.700-200 200-200s200 89.700 200 200c0 43.200-13.900 83.200-37.300 115.900z"/></svg><div class="st"><i style="background:#fdb913"></i><div style="margin-left:-1.0px"><span style="letter-spacing:2.51px">Pending</span></div><svg style="position:absolute;left:248px;top:14.5px;" width="15.5" height="28" viewBox="0 0 320 512" preserveAspectRatio="none"><path fill="#777" d="M31.300 192h257.300c17.800 0 26.700 21.500 14.100 34.100L174.100 354.800c-7.800 7.800-20.500 7.800-28.300 0L17.200 226.100C4.600 213.500 13.500 192 31.300 192z"/></svg></div><svg style="position:absolute;left:2168px;top:0px;top:50%;margin-top:-21px" width="43" height="38" viewBox="0 0 576 512" preserveAspectRatio="none"><path fill="#444" d="M402.3 344.9l32-32c5-5 13.700-1.500 13.700 5.700V464c0 26.500-21.500 48-48 48H48c-26.500 0-48-21.500-48-48V112c0-26.500 21.500-48 48-48h273.500c7.100 0 10.700 8.600 5.700 13.700l-32 32c-1.500 1.500-3.500 2.300-5.700 2.300H48v352h352V350.500c0-2.100.8-4.100 2.300-5.600zm156.600-201.800L296.300 405.700l-90.400 10c-26.200 2.900-48.500-19.200-45.600-45.600l10-90.400L432.900 17.100c22.900-22.900 59.900-22.900 82.700 0l43.200 43.200c22.900 22.900 22.900 60 .1 82.800zM460.100 174L402 115.900 216.200 301.800l-7.300 65.300 65.300-7.300L460.100 174zm64.800-79.700l-43.200-43.200c-4.100-4.100-10.800-4.100-14.800 0L436 82l58.100 58.100 30.900-30.900c4-4.200 4-10.800-.1-14.900z"/></svg><svg style="position:absolute;left:2233px;top:50%;margin-top:-23px" width="34" height="39" viewBox="0 0 34 39" fill="none" stroke="#222" stroke-width="2.600"><path d="M11 6V3.500a2 2 0 0 1 2-2h8a2 2 0 0 1 2 2V6"/><rect x="1.500" y="6" width="31" height="5" rx="1.500"/><path d="M4.500 11l2 24a2.500 2.500 0 0 0 2.500 2.300h16a2.500 2.500 0 0 0 2.500-2.300l2-24"/><path d="M11.500 15.500v17M17 15.500v17M22.500 15.500v17"/></svg></div>
<div class="row" style="top:1155.3px;height:151.4px"><div class="id"><span style="letter-spacing:0.58px">#RP-2026-</span><br><span style="letter-spacing:0.53px">0023</span></div><div class="btn"><svg style="position:absolute;left:17px;top:9.8px;" width="16" height="29" viewBox="0 0 320 512" preserveAspectRatio="none"><path fill="#1572be" d="M31.300 192h257.300c17.800 0 26.700 21.500 14.100 34.100L174.100 354.800c-7.800 7.800-20.500 7.800-28.300 0L17.200 226.100C4.600 213.500 13.500 192 31.300 192z"/></svg></div><div class="c" style="left:394.20000000000005px"><div class="t"><span style="letter-spacing:1.42px;margin-left:-1.4px">10:48</span></div><div class="d" style="margin-left:-0.3px"><span style="letter-spacing:-0.17px">april 05, 2026</span></div></div><div class="c" style="left:655px;width:270px;padding-top:2px"><div class="n"><span style="letter-spacing:1.19px;margin-left:2.5px">Tablet Apple</span></div><div class="m"><span style="letter-spacing:-0.86px;margin-left:-0.0px">IPAD 10.2 (2021)</span></div></div><div class="c n" style="left:928.2px"><span style="letter-spacing:1.04px">Screen</span></div><div class="plus" style="left:1053.75px">+1</div><div class="c p" style="left:1280px"><span class="dj" style="letter-spacing:-1.41px;margin-left:-2.2px">279</span></div><div class="c" style="left:1440px;width:260px;padding-top:2px"><div class="n"><span style="letter-spacing:0.83px;margin-left:0.6px">Levi Hendriks</span></div><div class="m"><span style="letter-spacing:0.22px;margin-left:0.6px">06-43234580</span></div></div><svg style="position:absolute;left:1700.5px;top:0px;top:50%;margin-top:-24.5px" width="46.5" height="46.5" viewBox="0 0 496 512" preserveAspectRatio="none"><path fill="#1e73be" d="M248 104c-53 0-96 43-96 96s43 96 96 96 96-43 96-96-43-96-96-96zm0 144c-26.500 0-48-21.500-48-48s21.500-48 48-48 48 21.500 48 48-21.500 48-48 48zm0-240C111 8 0 119 0 256s111 248 248 248 248-111 248-248S385 8 248 8zm0 448c-49.700 0-95.100-18.300-130.100-48.400 14.900-23 40.400-38.600 69.600-39.500 20.800 6.400 40.600 9.600 60.500 9.600s39.700-3.100 60.500-9.600c29.200 1 54.700 16.500 69.600 39.500-35 30.100-80.400 48.400-130.100 48.400zm162.700-84.100c-24.400-31.400-62.100-51.900-105.100-51.900-10.200 0-26 9.600-57.600 9.600-31.500 0-47.400-9.600-57.600-9.600-42.900 0-80.600 20.500-105.100 51.900C61.900 339.200 48 299.200 48 256c0-110.300 89.700-200 200-200s200 89.700 200 200c0 43.200-13.900 83.200-37.300 115.900z"/></svg><div class="st"><i style="background:#2ecc71"></i><div style="margin-left:0.0px"><span style="letter-spacing:1.21px">Approved</span></div><svg style="position:absolute;left:248px;top:14.5px;" width="15.5" height="28" viewBox="0 0 320 512" preserveAspectRatio="none"><path fill="#777" d="M31.300 192h257.300c17.800 0 26.700 21.500 14.100 34.100L174.100 354.800c-7.800 7.800-20.500 7.800-28.300 0L17.200 226.100C4.600 213.500 13.500 192 31.300 192z"/></svg></div><svg style="position:absolute;left:2168px;top:0px;top:50%;margin-top:-21px" width="43" height="38" viewBox="0 0 576 512" preserveAspectRatio="none"><path fill="#444" d="M402.3 344.9l32-32c5-5 13.700-1.500 13.700 5.700V464c0 26.500-21.500 48-48 48H48c-26.500 0-48-21.500-48-48V112c0-26.500 21.500-48 48-48h273.500c7.100 0 10.700 8.600 5.700 13.700l-32 32c-1.500 1.500-3.500 2.300-5.700 2.300H48v352h352V350.500c0-2.100.8-4.100 2.300-5.600zm156.600-201.800L296.300 405.700l-90.400 10c-26.200 2.900-48.500-19.200-45.600-45.600l10-90.400L432.900 17.100c22.900-22.900 59.900-22.900 82.700 0l43.200 43.200c22.900 22.900 22.900 60 .1 82.800zM460.100 174L402 115.900 216.200 301.800l-7.300 65.300 65.300-7.300L460.100 174zm64.800-79.700l-43.200-43.200c-4.100-4.100-10.800-4.100-14.800 0L436 82l58.100 58.100 30.900-30.900c4-4.200 4-10.800-.1-14.900z"/></svg><svg style="position:absolute;left:2233px;top:50%;margin-top:-23px" width="34" height="39" viewBox="0 0 34 39" fill="none" stroke="#222" stroke-width="2.600"><path d="M11 6V3.500a2 2 0 0 1 2-2h8a2 2 0 0 1 2 2V6"/><rect x="1.500" y="6" width="31" height="5" rx="1.500"/><path d="M4.500 11l2 24a2.500 2.500 0 0 0 2.500 2.300h16a2.500 2.500 0 0 0 2.500-2.300l2-24"/><path d="M11.500 15.500v17M17 15.500v17M22.500 15.500v17"/></svg></div>
<div class="row" style="top:1321.3px;height:158.4px"><div class="id"><span style="letter-spacing:0.58px">#RP-2026-</span><br><span style="letter-spacing:0.85px">0022</span></div><div class="btn"><svg style="position:absolute;left:17px;top:9.8px;" width="16" height="29" viewBox="0 0 320 512" preserveAspectRatio="none"><path fill="#1572be" d="M31.300 192h257.300c17.800 0 26.700 21.500 14.100 34.100L174.100 354.800c-7.800 7.800-20.500 7.800-28.300 0L17.200 226.100C4.600 213.500 13.500 192 31.300 192z"/></svg></div><div class="c" style="left:394.20000000000005px"><div class="t"><span style="letter-spacing:-0.84px;margin-left:-1.4px">16:30</span><span style="letter-spacing:-0.12px"> — </span><span style="letter-spacing:-0.14px">01:00</span></div><div class="d" style="margin-left:-0.3px"><span style="letter-spacing:-0.17px">april 05, 2026</span></div></div><div class="c" style="left:655px;width:270px;padding-top:2px"><div class="n"><span style="letter-spacing:1.74px;margin-left:0.1px">Smartphone</span><br><span style="letter-spacing:1.63px;margin-left:2.0px">Apple</span></div><div class="m"><span style="letter-spacing:0.96px;margin-left:-0.0px">IPHONE 14</span></div></div><div class="c n" style="left:927.2px"><span style="letter-spacing:0.91px">Battery</span></div><div class="plus" style="left:1062px">+1</div><div class="c p" style="left:1280px"><span class="dj" style="letter-spacing:-0.73px;margin-left:-1.2px">89</span></div><div class="c" style="left:1440px;width:260px;padding-top:2px"><div class="n"><span style="letter-spacing:1.18px;margin-left:0.6px">Nora Abdel</span></div><div class="m"><span style="letter-spacing:-0.4px;margin-left:0.6px">06-32234579</span></div></div><svg style="position:absolute;left:1700.5px;top:0px;top:50%;margin-top:-24.5px" width="46.5" height="46.5" viewBox="0 0 496 512" preserveAspectRatio="none"><path fill="#1e73be" d="M248 104c-53 0-96 43-96 96s43 96 96 96 96-43 96-96-43-96-96-96zm0 144c-26.500 0-48-21.500-48-48s21.500-48 48-48 48 21.500 48 48-21.500 48-48 48zm0-240C111 8 0 119 0 256s111 248 248 248 248-111 248-248S385 8 248 8zm0 448c-49.700 0-95.100-18.300-130.100-48.400 14.900-23 40.400-38.600 69.600-39.500 20.800 6.400 40.600 9.600 60.500 9.600s39.700-3.100 60.500-9.600c29.200 1 54.700 16.500 69.600 39.500-35 30.100-80.400 48.400-130.100 48.400zm162.700-84.100c-24.400-31.400-62.100-51.900-105.100-51.900-10.200 0-26 9.600-57.600 9.600-31.500 0-47.400-9.600-57.600-9.600-42.900 0-80.600 20.500-105.100 51.900C61.900 339.200 48 299.200 48 256c0-110.300 89.700-200 200-200s200 89.700 200 200c0 43.200-13.900 83.200-37.300 115.900z"/></svg><div class="st"><i style="background:#fdb913"></i><div style="margin-left:-1.0px"><span style="letter-spacing:2.51px">Pending</span></div><svg style="position:absolute;left:248px;top:14.5px;" width="15.5" height="28" viewBox="0 0 320 512" preserveAspectRatio="none"><path fill="#777" d="M31.300 192h257.300c17.800 0 26.700 21.500 14.100 34.100L174.100 354.800c-7.800 7.800-20.500 7.800-28.300 0L17.200 226.100C4.600 213.500 13.500 192 31.300 192z"/></svg></div><svg style="position:absolute;left:2168px;top:0px;top:50%;margin-top:-21px" width="43" height="38" viewBox="0 0 576 512" preserveAspectRatio="none"><path fill="#444" d="M402.3 344.9l32-32c5-5 13.700-1.500 13.700 5.700V464c0 26.500-21.500 48-48 48H48c-26.500 0-48-21.500-48-48V112c0-26.500 21.500-48 48-48h273.500c7.100 0 10.700 8.600 5.700 13.700l-32 32c-1.500 1.500-3.500 2.300-5.700 2.300H48v352h352V350.500c0-2.100.8-4.100 2.300-5.600zm156.600-201.800L296.300 405.700l-90.400 10c-26.200 2.900-48.500-19.200-45.600-45.600l10-90.400L432.900 17.100c22.900-22.900 59.900-22.900 82.700 0l43.200 43.200c22.900 22.900 22.900 60 .1 82.800zM460.100 174L402 115.900 216.200 301.800l-7.300 65.300 65.300-7.300L460.100 174zm64.800-79.700l-43.200-43.200c-4.100-4.100-10.800-4.100-14.800 0L436 82l58.100 58.100 30.900-30.900c4-4.200 4-10.800-.1-14.900z"/></svg><svg style="position:absolute;left:2233px;top:50%;margin-top:-23px" width="34" height="39" viewBox="0 0 34 39" fill="none" stroke="#222" stroke-width="2.600"><path d="M11 6V3.500a2 2 0 0 1 2-2h8a2 2 0 0 1 2 2V6"/><rect x="1.500" y="6" width="31" height="5" rx="1.500"/><path d="M4.500 11l2 24a2.500 2.500 0 0 0 2.500 2.300h16a2.500 2.500 0 0 0 2.500-2.300l2-24"/><path d="M11.500 15.500v17M17 15.500v17M22.500 15.500v17"/></svg></div>
<div class="row" style="top:1494.2px;height:194.3px"><div class="id"><span style="letter-spacing:0.58px">#RP-2026-</span><br><span style="letter-spacing:-1.81px">0021</span></div><div class="btn"><svg style="position:absolute;left:17px;top:9.8px;" width="16" height="29" viewBox="0 0 320 512" preserveAspectRatio="none"><path fill="#1572be" d="M31.300 192h257.300c17.800 0 26.700 21.500 14.100 34.100L174.100 354.800c-7.800 7.800-20.500 7.800-28.300 0L17.200 226.100C4.600 213.500 13.500 192 31.300 192z"/></svg></div><div class="c" style="left:394.20000000000005px"><div class="t"><span style="letter-spacing:1.54px;margin-left:-1.4px">10:00</span></div><div class="d" style="margin-left:-0.3px"><span style="letter-spacing:0.1px">april 04, 2026</span></div></div><div class="c" style="left:655px;width:270px;padding-top:2px"><div class="n"><span style="letter-spacing:1.74px;margin-left:0.1px">Smartphone</span><br><span style="letter-spacing:1.97px;margin-left:0.1px">Samsung</span></div><div class="m"><span style="letter-spacing:0.52px;margin-left:1.2px">GALAXY Z</span><br><span style="letter-spacing:2.6px;margin-left:-0.0px">FOLD4</span></div></div><div class="c n" style="left:927.2px"><span style="letter-spacing:0.91px">Battery</span></div><div class="plus" style="left:1062px">+1</div><div class="c p" style="left:1280px"><span class="dj" style="letter-spacing:-1.99px;margin-left:-1.7px">59</span></div><div class="c" style="left:1440px;width:260px;padding-top:2px"><div class="n"><span style="letter-spacing:1.05px;margin-left:0.6px">Finn van Dijk</span></div><div class="m"><span style="letter-spacing:-0.9px;margin-left:0.6px">06-21234578</span></div></div><svg style="position:absolute;left:1700.5px;top:0px;top:50%;margin-top:-24.5px" width="46.5" height="46.5" viewBox="0 0 496 512" preserveAspectRatio="none"><path fill="#1e73be" d="M248 104c-53 0-96 43-96 96s43 96 96 96 96-43 96-96-43-96-96-96zm0 144c-26.500 0-48-21.500-48-48s21.500-48 48-48 48 21.500 48 48-21.500 48-48 48zm0-240C111 8 0 119 0 256s111 248 248 248 248-111 248-248S385 8 248 8zm0 448c-49.700 0-95.100-18.300-130.100-48.400 14.900-23 40.400-38.600 69.600-39.500 20.800 6.400 40.600 9.600 60.500 9.600s39.700-3.100 60.500-9.600c29.200 1 54.700 16.500 69.600 39.500-35 30.100-80.400 48.400-130.100 48.400zm162.700-84.100c-24.400-31.400-62.100-51.900-105.100-51.900-10.200 0-26 9.600-57.600 9.600-31.500 0-47.400-9.600-57.600-9.600-42.900 0-80.600 20.500-105.100 51.900C61.900 339.200 48 299.200 48 256c0-110.300 89.700-200 200-200s200 89.700 200 200c0 43.200-13.900 83.200-37.300 115.900z"/></svg><div class="st"><i style="background:#2ecc71"></i><div style="margin-left:0.0px"><span style="letter-spacing:1.21px">Approved</span></div><svg style="position:absolute;left:248px;top:14.5px;" width="15.5" height="28" viewBox="0 0 320 512" preserveAspectRatio="none"><path fill="#777" d="M31.300 192h257.300c17.800 0 26.700 21.500 14.100 34.100L174.100 354.800c-7.800 7.800-20.500 7.800-28.300 0L17.200 226.100C4.600 213.500 13.500 192 31.300 192z"/></svg></div><svg style="position:absolute;left:2168px;top:0px;top:50%;margin-top:-21px" width="43" height="38" viewBox="0 0 576 512" preserveAspectRatio="none"><path fill="#444" d="M402.3 344.9l32-32c5-5 13.700-1.500 13.700 5.700V464c0 26.500-21.500 48-48 48H48c-26.500 0-48-21.500-48-48V112c0-26.500 21.500-48 48-48h273.500c7.100 0 10.700 8.600 5.700 13.700l-32 32c-1.500 1.500-3.500 2.300-5.700 2.300H48v352h352V350.500c0-2.100.8-4.100 2.300-5.600zm156.600-201.800L296.300 405.700l-90.400 10c-26.200 2.900-48.500-19.200-45.600-45.600l10-90.400L432.900 17.100c22.900-22.900 59.900-22.900 82.700 0l43.200 43.200c22.900 22.900 22.900 60 .1 82.800zM460.100 174L402 115.900 216.200 301.800l-7.300 65.300 65.300-7.300L460.100 174zm64.800-79.700l-43.200-43.200c-4.100-4.100-10.800-4.100-14.800 0L436 82l58.100 58.100 30.900-30.900c4-4.200 4-10.800-.1-14.900z"/></svg><svg style="position:absolute;left:2233px;top:50%;margin-top:-23px" width="34" height="39" viewBox="0 0 34 39" fill="none" stroke="#222" stroke-width="2.600"><path d="M11 6V3.500a2 2 0 0 1 2-2h8a2 2 0 0 1 2 2V6"/><rect x="1.500" y="6" width="31" height="5" rx="1.500"/><path d="M4.500 11l2 24a2.500 2.500 0 0 0 2.500 2.300h16a2.500 2.500 0 0 0 2.500-2.300l2-24"/><path d="M11.500 15.500v17M17 15.500v17M22.500 15.500v17"/></svg></div>
<div class="row" style="top:1703px;height:194px"><div class="id"><span style="letter-spacing:0.58px">#RP-2026-</span><br><span style="letter-spacing:0px">0020</span></div><div class="btn"><svg style="position:absolute;left:17px;top:9.8px;" width="16" height="29" viewBox="0 0 320 512" preserveAspectRatio="none"><path fill="#1572be" d="M31.300 192h257.300c17.800 0 26.700 21.500 14.100 34.100L174.100 354.800c-7.800 7.800-20.500 7.800-28.300 0L17.200 226.100C4.600 213.500 13.500 192 31.300 192z"/></svg></div><div class="c" style="left:394.20000000000005px"><div class="t"><span style="letter-spacing:-2.5px">09:30</span></div><div class="d" style="margin-left:-0.3px"><span style="letter-spacing:0.1px">april 04, 2026</span></div></div><div class="c" style="left:655px;width:270px;padding-top:2px"><div class="n"><span style="letter-spacing:1.1px;margin-left:2.5px">Tablet</span><br><span style="letter-spacing:1.97px;margin-left:0.1px">Samsung</span></div><div class="m"><span style="letter-spacing:0.3px;margin-left:1.2px">GALAXY TAB</span><br><span style="letter-spacing:0.3px;margin-left:0.8px">S8</span></div></div><div class="c n" style="left:928.2px"><span style="letter-spacing:1.04px">Screen</span></div><div class="c p" style="left:1280px"><span style="letter-spacing:-2.5px">129</span></div><div class="c" style="left:1440px;width:260px;padding-top:2px"><div class="n"><span style="letter-spacing:1.1px;margin-left:1.6px">Sara de Boer</span></div><div class="m"><span style="letter-spacing:0.3px;margin-left:0.6px">06-10234577</span></div></div><svg style="position:absolute;left:1700.5px;top:0px;top:50%;margin-top:-24.5px" width="46.5" height="46.5" viewBox="0 0 496 512" preserveAspectRatio="none"><path fill="#1e73be" d="M248 104c-53 0-96 43-96 96s43 96 96 96 96-43 96-96-43-96-96-96zm0 144c-26.500 0-48-21.500-48-48s21.500-48 48-48 48 21.500 48 48-21.500 48-48 48zm0-240C111 8 0 119 0 256s111 248 248 248 248-111 248-248S385 8 248 8zm0 448c-49.700 0-95.100-18.300-130.100-48.400 14.900-23 40.400-38.600 69.600-39.500 20.800 6.400 40.600 9.600 60.500 9.600s39.700-3.100 60.500-9.600c29.200 1 54.700 16.500 69.600 39.500-35 30.100-80.400 48.400-130.100 48.400zm162.700-84.100c-24.400-31.400-62.100-51.900-105.100-51.900-10.200 0-26 9.600-57.600 9.600-31.500 0-47.400-9.600-57.600-9.600-42.900 0-80.600 20.500-105.100 51.900C61.900 339.200 48 299.200 48 256c0-110.300 89.700-200 200-200s200 89.700 200 200c0 43.200-13.900 83.200-37.300 115.900z"/></svg><div class="st"><i style="background:#2ecc71"></i><div style="margin-left:0.0px"><span style="letter-spacing:1.21px">Approved</span></div><svg style="position:absolute;left:248px;top:14.5px;" width="15.5" height="28" viewBox="0 0 320 512" preserveAspectRatio="none"><path fill="#777" d="M31.300 192h257.300c17.800 0 26.700 21.500 14.100 34.100L174.100 354.800c-7.800 7.800-20.500 7.800-28.300 0L17.200 226.100C4.600 213.500 13.500 192 31.300 192z"/></svg></div><svg style="position:absolute;left:2168px;top:0px;top:50%;margin-top:-21px" width="43" height="38" viewBox="0 0 576 512" preserveAspectRatio="none"><path fill="#444" d="M402.3 344.9l32-32c5-5 13.700-1.500 13.700 5.700V464c0 26.500-21.500 48-48 48H48c-26.500 0-48-21.500-48-48V112c0-26.500 21.500-48 48-48h273.500c7.100 0 10.700 8.600 5.700 13.700l-32 32c-1.500 1.500-3.500 2.300-5.700 2.300H48v352h352V350.500c0-2.100.8-4.100 2.300-5.600zm156.600-201.800L296.300 405.700l-90.400 10c-26.200 2.900-48.500-19.200-45.600-45.600l10-90.400L432.900 17.100c22.900-22.900 59.900-22.900 82.700 0l43.200 43.200c22.900 22.900 22.900 60 .1 82.800zM460.100 174L402 115.900 216.200 301.800l-7.300 65.300 65.300-7.300L460.100 174zm64.800-79.700l-43.200-43.200c-4.100-4.100-10.800-4.100-14.800 0L436 82l58.100 58.100 30.900-30.900c4-4.200 4-10.800-.1-14.900z"/></svg><svg style="position:absolute;left:2233px;top:50%;margin-top:-23px" width="34" height="39" viewBox="0 0 34 39" fill="none" stroke="#222" stroke-width="2.600"><path d="M11 6V3.500a2 2 0 0 1 2-2h8a2 2 0 0 1 2 2V6"/><rect x="1.500" y="6" width="31" height="5" rx="1.500"/><path d="M4.500 11l2 24a2.500 2.500 0 0 0 2.500 2.300h16a2.500 2.500 0 0 0 2.500-2.300l2-24"/><path d="M11.500 15.500v17M17 15.500v17M22.500 15.500v17"/></svg></div>
</body></html>
